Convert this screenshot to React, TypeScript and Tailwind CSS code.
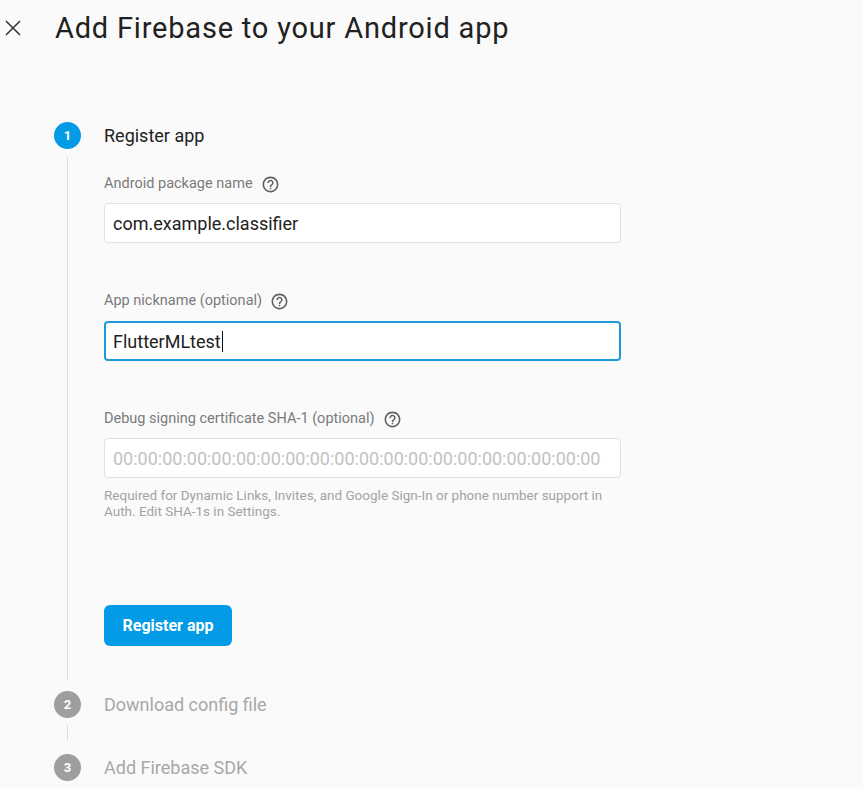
import type { ReactNode } from "react";

const font = { fontFamily: "Roboto, 'Liberation Sans', sans-serif" };

function HelpIcon() {
  return (
    <svg viewBox="0 0 24 24" className="h-[19px] w-[19px] fill-[#616161]">
      <path d="M11 18h2v-2h-2v2zm1-16C6.48 2 2 6.48 2 12s4.48 10 10 10 10-4.48 10-10S17.52 2 12 2zm0 18c-4.41 0-8-3.59-8-8s3.59-8 8-8 8 3.59 8 8-3.59 8-8 8zm0-14c-2.21 0-4 1.79-4 4h2c0-1.1.9-2 2-2s2 .9 2 2c0 2-3 1.75-3 5h2c0-2.25 3-2.5 3-5 0-2.21-1.79-4-4-4z" />
    </svg>
  );
}

function FieldLabel({ children }: { children: ReactNode }) {
  return (
    <div className="flex h-5 items-center gap-[8px] text-[14.5px] text-[#7a7a7a]">
      <span>{children}</span>
      <HelpIcon />
    </div>
  );
}

function StepBadge({ n, active }: { n: number; active?: boolean }) {
  return (
    <div
      className={`flex h-[27px] w-[27px] shrink-0 items-center justify-center rounded-full text-[13px] font-bold text-white ${
        active ? "bg-[#039be5]" : "bg-[#9e9e9e]"
      }`}
    >
      {n}
    </div>
  );
}

export default function App() {
  return (
    <div className="min-h-[788px] bg-[#fafafa]" style={font}>
      <header className="flex items-start pt-[10px]">
        <button className="ml-[1px] flex h-9 w-6 items-center justify-center text-[#333]">
          <svg viewBox="0 0 16 16" className="h-4 w-4" stroke="currentColor" strokeWidth="1.5">
            <path d="M1 1l14 14M15 1L1 15" />
          </svg>
        </button>
        <h1 className="ml-[30px] text-[29px] leading-[36px] tracking-[0.8px] text-[#212121]">
          Add Firebase to your Android app
        </h1>
      </header>

      <div className="ml-[54px] mt-[76px]">
        {/* step 1 */}
        <div className="flex gap-[23px]">
          <div className="flex w-[27px] flex-col items-center">
            <StepBadge n={1} active />
            <div className="mb-[11px] mt-2 w-px flex-1 bg-[#dcdcdc]" />
          </div>
          <div className="pb-[45px]">
            <div className="text-[18px] leading-[27px] text-[#212121]">Register app</div>

            <div className="mt-[25px]">
              <FieldLabel>Android package name</FieldLabel>
              <div className="mt-[9px] flex h-10 w-[517px] items-center rounded-[4px] border border-[#e0e0e0] bg-white pl-2 text-[18px] text-[#212121]">
                com.example.classifier
              </div>
            </div>

            <div className="mt-[48px]">
              <FieldLabel>App nickname (optional)</FieldLabel>
              <div className="mt-[10px] flex h-10 w-[517px] items-center rounded-[4px] border-2 border-[#1e9bd7] bg-white pl-[7px] text-[18px] text-[#212121]">
                FlutterMLtest
                <span className="ml-px h-[21px] w-px bg-[#111]" />
              </div>
            </div>

            <div className="mt-[48px]">
              <FieldLabel>Debug signing certificate SHA-1 (optional)</FieldLabel>
              <div className="mt-[9px] flex h-10 w-[517px] items-center rounded-[4px] border border-[#e0e0e0] bg-white pl-2 text-[18px] text-[#c2c2c2]">
                00:00:00:00:00:00:00:00:00:00:00:00:00:00:00:00:00:00:00:00
              </div>
              <p className="mt-[9px] w-[517px] text-[13.5px] leading-4 text-[#a3a3a3]">
                Required for Dynamic Links, Invites, and Google Sign-In or phone number support in
                Auth. Edit SHA-1s in Settings.
              </p>
            </div>

            <button className="mt-[86px] h-[41px] w-[128px] rounded-[6px] bg-[#039be5] text-[16px] font-bold text-white">
              Register app
            </button>
          </div>
        </div>

        {/* step 2 */}
        <div className="flex gap-[23px]">
          <div className="flex w-[27px] flex-col items-center">
            <StepBadge n={2} />
            <div className="mb-[13px] mt-[7px] h-4 w-px bg-[#dcdcdc]" />
          </div>
          <div className="text-[18px] leading-[27px] text-[#a8a8a8]">Download config file</div>
        </div>

        {/* step 3 */}
        <div className="flex gap-[23px]">
          <div className="flex w-[27px] flex-col items-center">
            <StepBadge n={3} />
          </div>
          <div className="text-[18px] leading-[27px] text-[#a8a8a8]">Add Firebase SDK</div>
        </div>
      </div>
    </div>
  );
}
